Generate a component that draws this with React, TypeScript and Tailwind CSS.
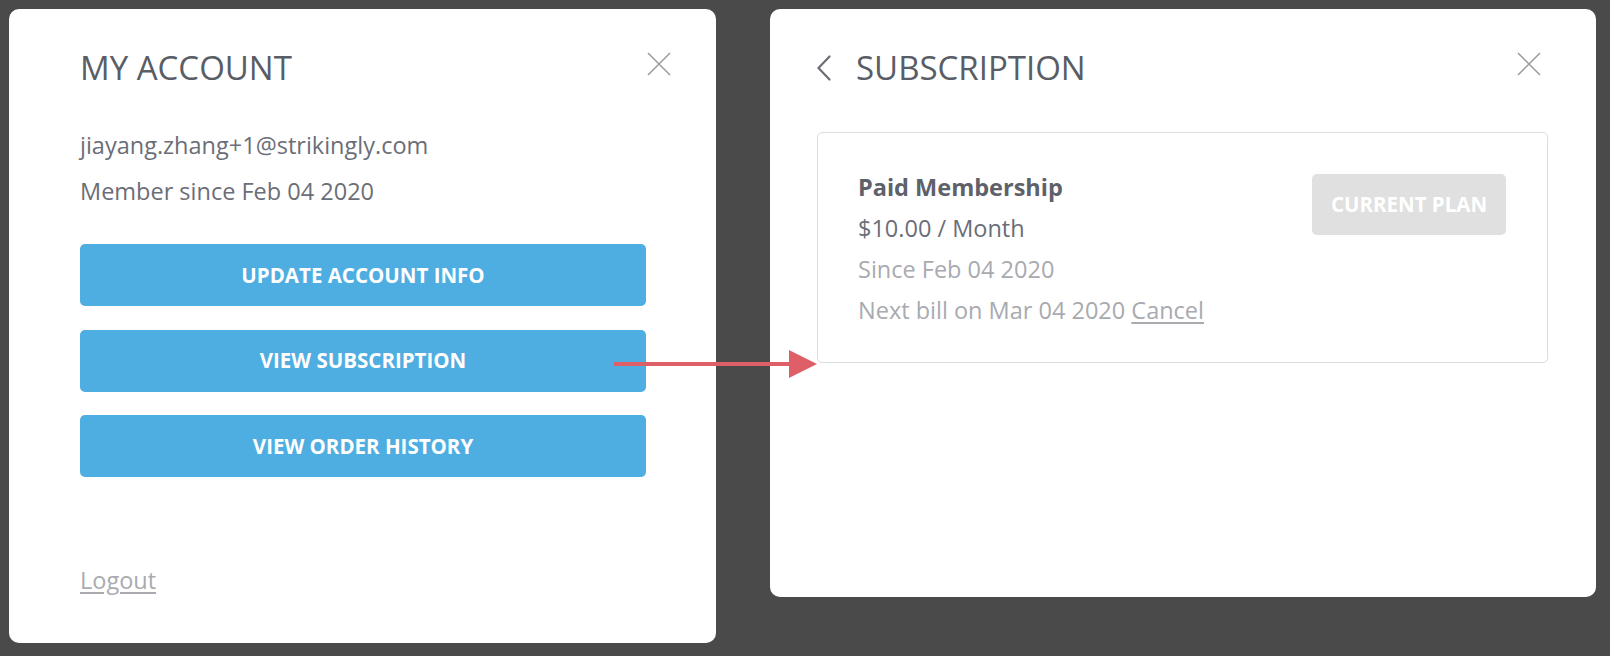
import React from 'react';

const CloseIcon = () => (
    <svg width="24" height="24" viewBox="0 0 24 24" fill="none" stroke="#9b9b9b" strokeWidth="1.5">
        <path d="M1 1 L23 23 M23 1 L1 23" />
    </svg>
);

const BackIcon = () => (
    <svg width="14" height="26" viewBox="0 0 14 26" fill="none" stroke="#6a6e75" strokeWidth="2.2" strokeLinecap="round">
        <path d="M12.5 1.5 L1.5 13 L12.5 24.5" />
    </svg>
);

const BlueButton = ({ label }: { label: string }) => (
    <button className="h-[62px] w-full rounded-[5px] bg-[#4faee1] text-[20.5px] font-bold uppercase text-white">
        {label}
    </button>
);

const AccountCard = () => (
    <div className="relative flex h-[634px] w-[707px] flex-col rounded-[10px] bg-white pl-[71px] pr-[70px] pt-[39px] pb-[47px]">
        <div className="absolute right-[45px] top-[43px]">
            <CloseIcon />
        </div>
        <h1 className="text-[33px] font-medium leading-[40px] text-[#595d65]">MY ACCOUNT</h1>
        <div className="mt-[34px] text-[23.5px] leading-[46px] text-[#6b6e76]">
            <p>jiayang.zhang+1@strikingly.com</p>
            <p>Member since Feb 04 2020</p>
        </div>
        <div className="mt-[30px] flex flex-col gap-[23.5px]">
            <BlueButton label="Update Account Info" />
            <BlueButton label="View Subscription" />
            <BlueButton label="View Order History" />
        </div>
        <a className="mt-auto text-[23.5px] leading-[32px] text-[#a9abb0] underline underline-offset-[3px]">Logout</a>
    </div>
);

const SubscriptionCard = () => (
    <div className="relative h-[588px] w-[826px] rounded-[10px] bg-white pl-[47px] pr-[48px] pt-[39px]">
        <div className="absolute right-[55px] top-[43px]">
            <CloseIcon />
        </div>
        <div className="flex items-center gap-[25px]">
            <BackIcon />
            <h1 className="text-[33px] font-medium leading-[40px] text-[#595d65]">SUBSCRIPTION</h1>
        </div>
        <div className="mt-[44px] flex items-start justify-between rounded-[5px] border border-[#dcdde0] pl-[40px] pr-[41px] pt-[34px] pb-[31px]">
            <div className="text-[23.5px] leading-[41px]">
                <p className="font-bold text-[#5d6169]">Paid Membership</p>
                <p className="text-[#6b6e76]">$10.00 / Month</p>
                <p className="text-[#a8aaaf]">Since Feb 04 2020</p>
                <p className="text-[#a8aaaf]">
                    Next bill on Mar 04 2020 <span className="underline underline-offset-[3px]">Cancel</span>
                </p>
            </div>
            <button className="mt-[7px] h-[61px] w-[194px] rounded-[5px] bg-[#e0e0e0] text-[20.5px] font-bold text-white">
                CURRENT PLAN
            </button>
        </div>
    </div>
);

export default function App() {
    return (
        <div className="relative flex h-[656px] w-full items-start gap-[54px] bg-[#4a4a4a] pl-[9px] pt-[9px] font-['Open_Sans',sans-serif]">
            <AccountCard />
            <SubscriptionCard />
            <svg className="absolute left-[614px] top-[350px]" width="204" height="28" viewBox="0 0 204 28">
                <rect x="0" y="12" width="180" height="4" fill="#df5f68" />
                <path d="M175 0 L203 14 L175 28 Z" fill="#df5f68" />
            </svg>
        </div>
    );
}
